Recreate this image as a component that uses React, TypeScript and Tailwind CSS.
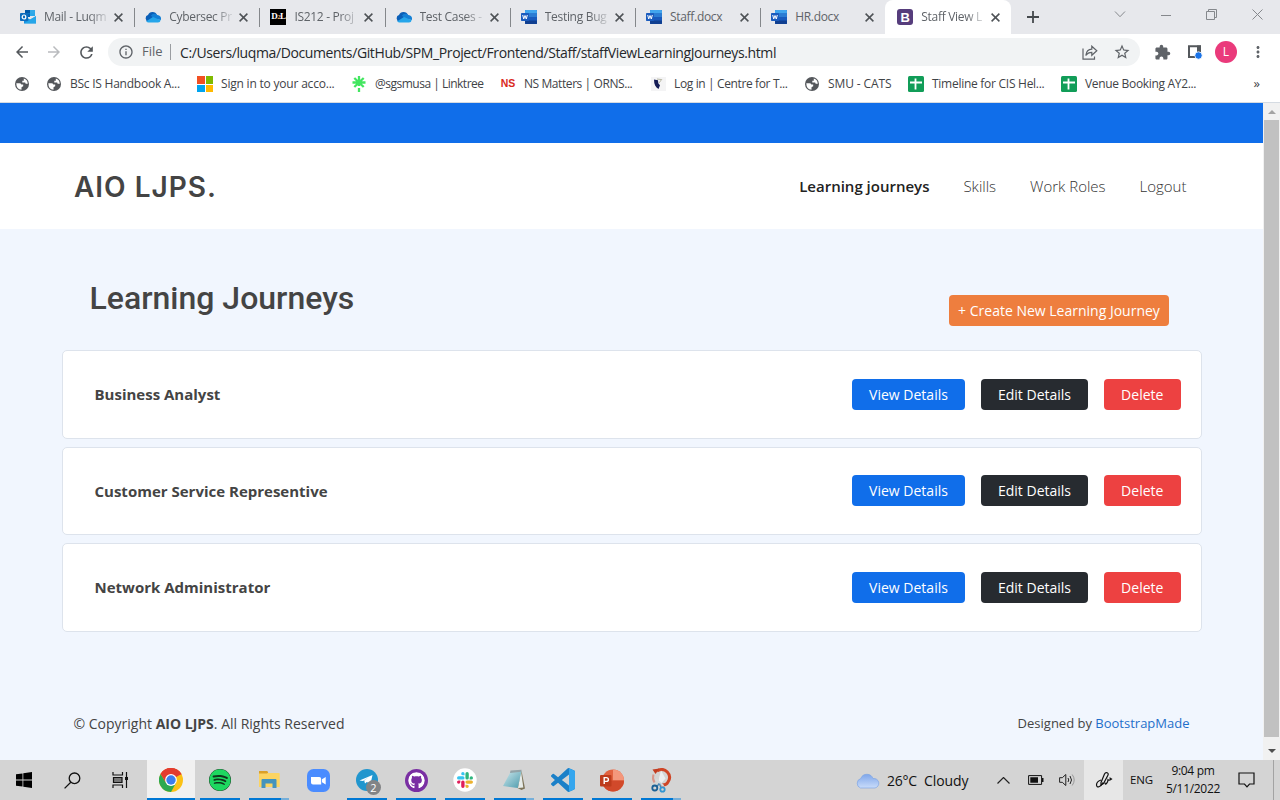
import type { ReactNode } from "react";
import {
  MdArrowBack,
  MdArrowForward,
  MdExtension,
  MdInfoOutline,
  MdMoreVert,
  MdRefresh,
  MdStarBorder,
} from "react-icons/md";
import { FaGithub, FaSpotify } from "react-icons/fa";

/* ---------- favicons ---------- */

function GlobeIcon() {
  return (
    <svg width="14" height="14" viewBox="0 0 14 14">
      <circle cx="7" cy="7" r="7" fill="#54575b" />
      <path
        d="M1.300 6.300h3.200q1.500 0 1.800 1.300h1.900v1.700L6.500 10.300v2.500Q1.300 12.300 1.300 6.300z"
        fill="#fff"
      />
      <path d="M8.800 1.500q3.700 1 4 5.200H11q-.7 0-.8-1.200H7.300V3.800H8.800z" fill="#fff" />
    </svg>
  );
}

function OutlookIcon() {
  return (
    <svg width="16" height="16" viewBox="0 0 16 16">
      <path d="M5 1h10v6H5z" fill="#28a8ea" />
      <path d="M5 1h5v3.500H5z" fill="#0358a7" />
      <path d="M10 1h5v3.500h-5z" fill="#32a9e7" />
      <path d="M5 4.500h5V8H5z" fill="#0364b8" />
      <path d="M4 7l6 3.500L16 7v7.500H4z" fill="#1490df" />
      <path d="M4 14.500L16 7v7.500z" fill="#35b8f1" opacity=".55" />
      <rect x="0" y="4" width="8" height="8" rx=".8" fill="#0f6cbd" />
      <ellipse cx="4" cy="8" rx="1.800" ry="2" fill="none" stroke="#fff" strokeWidth="1.200" />
    </svg>
  );
}

function OneDriveIcon() {
  return (
    <svg width="16" height="11" viewBox="0 0 16 11">
      <path d="M3.300 9.500A3.300 3.300 0 0 1 3 3.100 4.800 4.800 0 0 1 12 3.200L8 7z" fill="#0a5fb8" />
      <path d="M6 3.500a4 4 0 0 1 6.300-.4A3.600 3.600 0 0 1 15.800 8L9 7z" fill="#1480d6" />
      <path d="M1.200 9.200L8 4.900l7.600 3.300A3 3 0 0 1 13 10.600H3.600a3.500 3.500 0 0 1-2.400-1.400z" fill="#25a5ea" />
    </svg>
  );
}

function D2LIcon() {
  return (
    <span className="flex h-4 w-4 flex-col items-center justify-center bg-black font-['Liberation_Serif',serif] text-[9px] leading-[9px] font-bold tracking-[-0.6px] whitespace-nowrap text-white">
      <span>
        D<span className="text-[7px] text-orange-300">2</span>L
      </span>
    </span>
  );
}

function WordIcon() {
  return (
    <svg width="16" height="14" viewBox="0 0 16 14">
      <rect x="4" width="12" height="14" rx=".8" fill="#185abd" />
      <path d="M4 .8Q4 0 4.800 0h10.400q.8 0 .8.800V3.500H4z" fill="#41a5ee" />
      <path d="M4 3.500h12V7H4z" fill="#2b7cd3" />
      <path d="M4 10.500h12v2.700q0 .8-.8.800H4.800q-.8 0-.8-.8z" fill="#103f91" />
      <rect y="3" width="8" height="8" rx=".7" fill="#1b5cbe" />
      <path d="M1.700 5l1 4L4 5.500 5.300 9l1-4" fill="none" stroke="#fff" strokeWidth="1" />
    </svg>
  );
}

function BootstrapIcon() {
  return (
    <span className="flex h-4 w-4 items-center justify-center rounded-[3px] bg-[#563d7c] font-['Liberation_Sans',sans-serif] text-[13px] leading-none font-bold text-white">
      B
    </span>
  );
}

function MicrosoftIcon() {
  return (
    <span className="grid h-4 w-4 grid-cols-2 gap-px">
      <span className="bg-[#f25022]" />
      <span className="bg-[#7fba00]" />
      <span className="bg-[#00a4ef]" />
      <span className="bg-[#ffb900]" />
    </span>
  );
}

function LinktreeIcon() {
  return (
    <svg width="14" height="16" viewBox="0 0 14 16" stroke="#43e660" strokeWidth="2.300" fill="none">
      <path d="M7 0v10M7 12v4M.5 6.500h13M2.300 2l9.400 9M11.700 2l-9.400 9" />
    </svg>
  );
}

function CentreIcon() {
  return (
    <svg width="15" height="14" viewBox="0 0 15 14">
      <rect width="15" height="14" fill="#f4f4f5" />
      <path d="M3 2.500l4 .8.300 3 1.700 2-1.500 3.700C4.500 10.500 3 7.500 3 2.500z" fill="#151c55" />
      <path d="M8 6l3-4M6 2l4 .5" stroke="#b9b8a5" />
    </svg>
  );
}

function SheetsIcon() {
  return (
    <svg width="16" height="16" viewBox="0 0 16 16">
      <rect width="16" height="16" rx="1.500" fill="#119d58" />
      <path d="M2 6.500h12M7.500 2.500v11" stroke="#fff" strokeWidth="1.800" />
    </svg>
  );
}

/* ---------- browser chrome ---------- */

function CloseX() {
  return (
    <svg width="9" height="9" viewBox="0 0 9 9" stroke="#4e5256" strokeWidth="1.500">
      <path d="M.6.600l7.800 7.800M8.400.600L.6 8.400" />
    </svg>
  );
}

const tabs: { title: string; icon: ReactNode; active?: boolean; last?: boolean }[] = [
  { title: "Mail - Luqm", icon: <OutlookIcon /> },
  { title: "Cybersec Pr", icon: <OneDriveIcon /> },
  { title: "IS212 - Proj", icon: <D2LIcon /> },
  { title: "Test Cases -", icon: <OneDriveIcon /> },
  { title: "Testing Bug", icon: <WordIcon /> },
  { title: "Staff.docx", icon: <WordIcon /> },
  { title: "HR.docx", icon: <WordIcon />, last: true },
  { title: "Staff View L", icon: <BootstrapIcon />, active: true },
];

function TabStrip() {
  return (
    <div className="flex h-[34px] shrink-0 bg-[#e7e8ec] pl-[10px]">
      {tabs.map((t, i) => (
        <div
          key={i}
          className={
            t.active
              ? "relative -ml-[1px] flex h-[34px] w-[126px] shrink-0 items-center rounded-t-lg bg-white pl-[12px]"
              : "relative flex h-[34px] w-[125.200px] shrink-0 items-center pl-[10px]"
          }
        >
          <span className="flex w-4 justify-center">{t.icon}</span>
          <span
            className={
              t.title.endsWith(".docx")
                ? "ml-2 w-[66px] text-[12px] tracking-[-0.3px] whitespace-nowrap text-[#5f6368]"
                : "ml-2 w-[66px] text-[12px] tracking-[-0.3px] whitespace-nowrap text-[#5f6368] [mask-image:linear-gradient(to_right,black_68%,rgba(0,0,0,0.15)_96%)]"
            }
          >
            {t.title}
          </span>
          <span className="ml-[4px]">
            <CloseX />
          </span>
          {!t.active && !t.last && <span className="absolute top-[8px] right-0 h-[19px] w-px bg-[#84878b]" />}
        </div>
      ))}
      <div className="flex flex-1 items-center pl-[16px]">
        <svg width="12" height="12" viewBox="0 0 12 12" stroke="#45494d" strokeWidth="1.800">
          <path d="M6 0v12M0 6h12" />
        </svg>
      </div>
      <div className="flex h-[29px] w-[166px] items-center justify-between pr-[17px]">
        <svg width="12" height="7" viewBox="0 0 12 7" fill="none" stroke="#85888c">
          <path d="M1 .5l5 5.200L11 .5" />
        </svg>
        <svg width="10" height="2" viewBox="0 0 10 2">
          <path d="M0 1.500h10" stroke="#85888c" />
        </svg>
        <svg width="11" height="11" viewBox="0 0 11 11" fill="none" stroke="#85888c">
          <path d="M.5 2.500h8v8h-8zM2.500 2.500v-2h8v8h-2" />
        </svg>
        <svg width="11" height="11" viewBox="0 0 11 11" fill="none" stroke="#85888c">
          <path d="M.5.500l10 10M10.500.500l-10 10" />
        </svg>
      </div>
    </div>
  );
}

function AddressRow() {
  return (
    <div className="flex h-9 shrink-0 items-center bg-white pl-[13px] text-[#5f6368]">
      <MdArrowBack size={18} className="text-[#54585c]" />
      <MdArrowForward size={18} className="ml-[14px] text-[#b9bbbe]" />
      <MdRefresh size={19} className="ml-[14px] text-[#54585c]" />
      <div className="ml-[12px] flex h-[28px] w-[1032px] items-center rounded-full bg-[#f1f3f4] pl-[10px]">
        <MdInfoOutline size={16} />
        <span className="ml-[8px] w-[22px] text-[13px]">File</span>
        <span className="mr-[9px] ml-[6px] h-4 w-px bg-[#9a9da1]" />
        <span className="text-[14px] tracking-[-0.385px] whitespace-nowrap text-[#25282b]">
          C:/Users/luqma/Documents/GitHub/SPM_Project/Frontend/Staff/staffViewLearningJourneys.html
        </span>
        <span className="flex-1" />
        <svg width="16" height="15" viewBox="0 0 16 15" fill="none" stroke="#5f6368" strokeWidth="1.200">
          <path d="M1 3.500v10.700h11.500V11.500" />
          <path d="M3.800 10.500C4.300 6.500 6.500 4.300 9.800 4.200V1.200l5 4.600-5 4.500V7.300C7 7.300 5.200 8.300 3.800 10.500z" />
        </svg>
        <MdStarBorder size={18} className="mr-[9px] ml-[15px]" />
      </div>
      <MdExtension size={17} className="ml-[14px]" />
      <svg width="16" height="16" viewBox="0 0 16 16" className="ml-[16px]">
        <path d="M2 2.200h11V13H2z" fill="none" stroke="#54585c" strokeWidth="2" />
        <path d="M10 1.500h4V8h-4z" fill="#54585c" />
        <circle cx="11.500" cy="11.500" r="3.700" fill="#1a73e8" stroke="#fff" strokeWidth=".8" />
      </svg>
      <span className="ml-[12px] flex h-[22px] w-[22px] items-center justify-center rounded-full bg-[#ea3a7b] text-[12px] text-white">
        L
      </span>
      <MdMoreVert size={18} className="ml-[12px]" />
    </div>
  );
}

function Bookmark({ icon, label, box }: { icon: ReactNode; label?: string; box: string }) {
  return (
    <div className={`flex shrink-0 items-center ${box}`}>
      <span className="flex w-4 shrink-0 justify-center">{icon}</span>
      {label && <span className="ml-2 whitespace-nowrap">{label}</span>}
    </div>
  );
}

function Bookmarks() {
  return (
    <div className="flex h-[33px] shrink-0 items-center border-b border-[#d5dbe2] bg-white pb-[4px] pl-[14px] text-[12px] text-[#3f4347]">
      <Bookmark box="w-[32px]" icon={<GlobeIcon />} />
      <Bookmark box="w-[151px] tracking-[-0.24px]" icon={<GlobeIcon />} label="BSc IS Handbook A..." />
      <Bookmark box="w-[154px] tracking-[-0.2px]" icon={<MicrosoftIcon />} label="Sign in to your acco..." />
      <Bookmark box="w-[149px] tracking-[-0.5px]" icon={<LinktreeIcon />} label="@sgsmusa | Linktree" />
      <Bookmark
        box="w-[150px] tracking-[-0.42px]"
        icon={
          <span className="font-['Liberation_Sans',sans-serif] text-[10.500px] font-black tracking-normal text-[#d9291c]">
            NS
          </span>
        }
        label="NS Matters | ORNS..."
      />
      <Bookmark box="w-[154px] tracking-[-0.37px]" icon={<CentreIcon />} label="Log in | Centre for T..." />
      <Bookmark box="w-[104px] tracking-[-0.1px]" icon={<GlobeIcon />} label="SMU - CATS" />
      <Bookmark box="w-[153px] tracking-[-0.27px]" icon={<SheetsIcon />} label="Timeline for CIS Hel..." />
      <Bookmark box="flex-1 tracking-[-0.32px]" icon={<SheetsIcon />} label="Venue Booking AY2..." />
      <span className="mr-[20px] text-[13px]">»</span>
    </div>
  );
}

/* ---------- web page ---------- */

const journeys = ["Business Analyst", "Customer Service Representive", "Network Administrator"];

function JourneyCard({ name }: { name: string }) {
  return (
    <div className="flex h-[88.600px] items-center rounded-[5px] border border-[#dde3ec] bg-white pr-[20px] pl-[32px] text-[14px]">
      <span className="flex-1 text-[15px] font-bold text-[#444]">{name}</span>
      <button className="h-[31px] w-[113px] rounded-[4px] bg-[#106eea] text-white">View Details</button>
      <button className="ml-4 h-[31px] w-[107px] rounded-[4px] bg-[#272b30] text-white">Edit Details</button>
      <button className="ml-4 h-[31px] w-[76.500px] rounded-[4px] bg-[#ed4141] text-white">Delete</button>
    </div>
  );
}

function WebPage() {
  return (
    <div className="flex min-w-0 flex-1 flex-col bg-[#f1f6fe] font-['Open_Sans',sans-serif] text-[#444]">
      <div className="h-10 shrink-0 bg-[#106eea]" />
      <header className="flex h-[86px] shrink-0 items-center justify-between bg-white pr-[76.500px] pl-[74px]">
        <div className="pt-[1px] font-[Inter,sans-serif] text-[28px] font-semibold tracking-[1px] text-[#444]">
          AIO LJPS.
        </div>
        <nav className="flex gap-[34px] pt-px text-[15px] font-light text-[#333]">
          <span className="font-semibold text-[#222]">Learning journeys</span>
          <span>Skills</span>
          <span>Work Roles</span>
          <span>Logout</span>
        </nav>
      </header>
      <main className="flex flex-1 flex-col px-[61.500px] pt-[48px]">
        <div className="flex h-[73px] items-start justify-between pr-[32.500px] pl-[28px]">
          <h1 className="font-[Roboto,sans-serif] text-[32px] leading-[42px] font-medium">Learning Journeys</h1>
          <button className="mt-[18px] h-[31px] w-[220px] rounded-[4px] bg-[#ee7e3e] text-[14px] whitespace-nowrap text-white">
            + Create New Learning Journey
          </button>
        </div>
        <div className="flex flex-col gap-[8px]">
          {journeys.map((j) => (
            <JourneyCard key={j} name={j} />
          ))}
        </div>
        <footer className="mt-[80.500px] flex items-start justify-between pr-[12px] pl-[12px] text-[14px] leading-[24px]">
          <span>
            © Copyright <strong>AIO LJPS</strong>. All Rights Reserved
          </span>
          <span className="text-[13px] leading-[22px]">
            Designed by <span className="text-[#1f6fca]">BootstrapMade</span>
          </span>
        </footer>
      </main>
    </div>
  );
}

function Scrollbar() {
  return (
    <div className="flex w-[17px] shrink-0 flex-col items-center bg-[#f1f1f1]">
      <div className="flex h-[17px] items-center">
        <svg width="8" height="4" viewBox="0 0 8 4">
          <path d="M0 4l4-4 4 4z" fill="#a3a3a3" />
        </svg>
      </div>
      <div className="w-[15px] flex-1 bg-[#c1c1c1]" />
      <div className="flex h-[23px] items-center pt-[5px]">
        <svg width="8" height="4" viewBox="0 0 8 4">
          <path d="M0 0l4 4 4-4z" fill="#505050" />
        </svg>
      </div>
    </div>
  );
}

/* ---------- taskbar ---------- */

function ChromeIcon() {
  return (
    <svg width="24" height="24" viewBox="0 0 24 24">
      <circle cx="12" cy="12" r="12" fill="#fbc116" />
      <path d="M12 12L1.600 6A12 12 0 0 1 22.400 6z" fill="#e33b2e" />
      <path d="M1.600 6l5.600 9L12 12v12A12 12 0 0 1 1.600 6z" fill="#2da94f" />
      <path d="M12 24l5-9h-9z" fill="#2da94f" />
      <path d="M1.600 6L7 14.800 12 6.500h10.600A12 12 0 0 0 1.600 6z" fill="#e33b2e" />
      <circle cx="12" cy="12" r="5.900" fill="#fff" />
      <circle cx="12" cy="12" r="4.700" fill="#3c7ded" />
    </svg>
  );
}

function FolderIcon() {
  return (
    <svg width="22" height="20" viewBox="0 0 22 20">
      <path d="M1 1h8l1.500 2.500H1z" fill="#d99a1d" />
      <path d="M1 3h20q.7 0 .7.700V17H1z" fill="#fcd462" />
      <path d="M1 1h8.300v2.500H1z" fill="#dba027" />
      <path d="M3.500 18V10q0-1 1-1h13q1 0 1 1v8h-4v-4.500h-7V18z" fill="#4493bd" />
    </svg>
  );
}

function ZoomIcon() {
  return (
    <svg width="23" height="23" viewBox="0 0 23 23">
      <rect width="23" height="23" rx="6.500" fill="#4a8cff" />
      <path d="M4 8h8.200q2 0 2 2v5.500H6q-2 0-2-2zM15 10.300L18.700 8v7.500L15 13.200z" fill="#fff" />
    </svg>
  );
}

function TelegramIcon() {
  return (
    <span className="relative flex">
      <svg width="22" height="22" viewBox="0 0 22 22">
        <circle cx="11" cy="11" r="11" fill="#2196ce" />
        <path d="M3.500 11.500L16.500 6l-2 9-3.700-2-1.800 1.500-.8-3L13 8l-6 4z" fill="#fff" />
      </svg>
      <span className="absolute top-[11px] left-[10px] flex h-[15px] w-[15px] items-center justify-center rounded-full bg-[#828486] text-[11px] leading-none text-white">
        2
      </span>
    </span>
  );
}

function SlackIcon() {
  return (
    <svg width="24" height="24" viewBox="-6 -6 36 36">
      <circle cx="12" cy="12" r="17.500" fill="#fff" />
      <path
        fill="#e01e5a"
        d="M5.042 15.165a2.528 2.528 0 0 1-2.520 2.523A2.528 2.528 0 0 1 0 15.165a2.527 2.527 0 0 1 2.522-2.520h2.520v2.520zM6.313 15.165a2.527 2.527 0 0 1 2.521-2.520 2.527 2.527 0 0 1 2.521 2.520v6.313A2.528 2.528 0 0 1 8.834 24a2.528 2.528 0 0 1-2.521-2.522v-6.313z"
      />
      <path
        fill="#36c5f0"
        d="M8.834 5.042a2.528 2.528 0 0 1-2.521-2.520A2.528 2.528 0 0 1 8.834 0a2.528 2.528 0 0 1 2.521 2.522v2.520H8.834zM8.834 6.313a2.528 2.528 0 0 1 2.521 2.521 2.528 2.528 0 0 1-2.521 2.521H2.522A2.528 2.528 0 0 1 0 8.834a2.528 2.528 0 0 1 2.522-2.521h6.312z"
      />
      <path
        fill="#2eb67d"
        d="M18.956 8.834a2.528 2.528 0 0 1 2.522-2.521A2.528 2.528 0 0 1 24 8.834a2.528 2.528 0 0 1-2.522 2.521h-2.522V8.834zM17.688 8.834a2.528 2.528 0 0 1-2.523 2.521 2.527 2.527 0 0 1-2.520-2.521V2.522A2.527 2.527 0 0 1 15.165 0a2.528 2.528 0 0 1 2.523 2.522v6.312z"
      />
      <path
        fill="#ecb22e"
        d="M15.165 18.956a2.528 2.528 0 0 1 2.523 2.522A2.528 2.528 0 0 1 15.165 24a2.527 2.527 0 0 1-2.520-2.522v-2.522h2.520zM15.165 17.688a2.527 2.527 0 0 1-2.520-2.523 2.526 2.526 0 0 1 2.520-2.520h6.313A2.527 2.527 0 0 1 24 15.165a2.528 2.528 0 0 1-2.522 2.523h-6.313z"
      />
    </svg>
  );
}

function NotepadIcon() {
  return (
    <svg width="24" height="22" viewBox="0 0 24 22">
      <defs>
        <linearGradient id="pad" x1="0" y1="0" x2="1" y2="1">
          <stop offset="0" stopColor="#cfe9ee" />
          <stop offset="1" stopColor="#4b9aac" />
        </linearGradient>
      </defs>
      <path d="M19.500 2L23 19.500l-3.500 1.500-4-2z" fill="#7d7459" />
      <path d="M19 2l2.300 16.500-5.300.5z" fill="#e7ece9" />
      <path d="M8.500 3L19.500 2l-3.800 17L1 17z" fill="url(#pad)" />
      <path d="M8.500 1.500L19.500.8v2L8 4z" fill="#93a3a8" />
    </svg>
  );
}

function VSCodeIcon() {
  return (
    <svg width="24" height="24" viewBox="0 0 24 24">
      <path
        fill="#1b80c8"
        d="M23.150 2.587L18.210.210a1.494 1.494 0 0 0-1.705.290l-9.460 8.630-4.120-3.128a.999.999 0 0 0-1.276.057L.327 7.261A1 1 0 0 0 .326 8.740L3.899 12 .326 15.260a1 1 0 0 0 .001 1.479L1.650 17.940a.999.999 0 0 0 1.276.057l4.120-3.128 9.460 8.630a1.492 1.492 0 0 0 1.704.290l4.942-2.377A1.500 1.500 0 0 0 24 20.060V3.939a1.500 1.500 0 0 0-.850-1.352zm-5.146 14.861L10.826 12l7.178-5.448v10.896z"
      />
      <path
        fill="#35a6ee"
        d="M18 .3l5.150 2.287a1.500 1.500 0 0 1 .85 1.352V20.060a1.500 1.500 0 0 1-.85 1.350L18 23.700z"
      />
    </svg>
  );
}

function PowerPointIcon() {
  return (
    <svg width="24" height="23" viewBox="0 0 24 23">
      <circle cx="13" cy="11.500" r="11" fill="#e2623f" />
      <path d="M13 .5a11 11 0 0 1 11 11H13z" fill="#f4977b" />
      <path d="M2 11.500h22a11 11 0 0 1-22 0z" fill="#d1492a" />
      <rect y="6" width="11.500" height="11.500" rx="1" fill="#bd3c1c" />
      <path d="M4.200 15V8.600h2q2.200 0 2.200 1.900t-2.200 1.900h-2" fill="none" stroke="#fff" strokeWidth="1.400" />
    </svg>
  );
}

function SnipIcon() {
  return (
    <svg width="22" height="25" viewBox="0 0 22 25" fill="none">
      <path d="M7 3Q13-.5 17.300 4t.7 10Q16.500 17.500 11.500 17" stroke="#cf4526" strokeWidth="3" />
      <path d="M2.500 1.500l7-1L5.500 6z" fill="#c23c20" />
      <path d="M3.500 6.500q-1.500 4 1 8" stroke="#d9968a" strokeWidth="2" />
      <path d="M11 2.500l4.500 8-7 8L9 10z" fill="#eceef0" />
      <path d="M5.500 11l8 7" stroke="#d5d9dc" strokeWidth="2" />
      <path d="M7.200 18.300l2-3M11 19.800l-1.500-4" stroke="#4b87b4" strokeWidth="1.500" />
      <circle cx="4.800" cy="20" r="2.500" stroke="#1b6196" strokeWidth="1.800" />
      <circle cx="12.500" cy="21.500" r="2.200" stroke="#3194d1" strokeWidth="1.800" />
    </svg>
  );
}

const apps: { name: string; icon: ReactNode; open?: boolean; focused?: boolean; stacked?: boolean }[] = [
  { name: "chrome", icon: <ChromeIcon />, focused: true },
  { name: "spotify", icon: <FaSpotify size={22} className="rounded-full bg-[#10351c] text-[#1ed760]" />, open: true },
  { name: "files", icon: <FolderIcon />, open: true, stacked: true },
  { name: "zoom", icon: <ZoomIcon /> },
  { name: "telegram", icon: <TelegramIcon />, open: true },
  {
    name: "github",
    icon: (
      <span className="flex h-[23px] w-[23px] items-center justify-center rounded-full bg-[#7a2fa3]">
        <FaGithub size={17} className="rounded-full bg-[#7a2fa3] text-white" />
      </span>
    ),
    open: true,
  },
  { name: "slack", icon: <SlackIcon />, open: true },
  { name: "notepad", icon: <NotepadIcon />, open: true, stacked: true },
  { name: "vscode", icon: <VSCodeIcon />, open: true },
  { name: "powerpoint", icon: <PowerPointIcon />, open: true },
  { name: "snip", icon: <SnipIcon />, open: true, stacked: true },
];

function Taskbar() {
  return (
    <div className="flex h-10 shrink-0 items-stretch bg-[#d4d4d4] text-[#111]">
      <div className="flex w-[147px] items-center">
        <svg width="16" height="16" viewBox="0 0 16 16" className="ml-4">
          <path d="M0 2.300L6.500 1.400V7.600H0zM7.300 1.300L16 0v7.600H7.300zM0 8.400h6.500v6.200L0 13.700zM7.300 8.400H16V16l-8.700-1.300z" />
        </svg>
        <svg width="17" height="17" viewBox="0 0 17 17" fill="none" stroke="#111" strokeWidth="1.300" className="ml-[32px]">
          <circle cx="10.500" cy="6.300" r="5.300" />
          <path d="M6.800 10.200L.6 16.400" />
        </svg>
        <svg width="17" height="16" viewBox="0 0 17 16" fill="none" stroke="#111" strokeWidth="1.200" className="ml-[31px]">
          <path d="M1 0v3h9.500V0M1 16v-3h9.500v3M14.500 0v16" />
          <path d="M1.500 5.500h8.500v5H1.500z" fill="#777" />
          <path d="M13 5h3v3h-3z" fill="#111" stroke="none" />
        </svg>
      </div>
      {apps.map((a) => (
        <div
          key={a.name}
          className={
            a.focused
              ? "mr-[1px] flex w-[48px] flex-col items-center bg-[#f1f1f1]"
              : "mr-[1px] flex w-[48px] flex-col items-center"
          }
        >
          <div className="flex h-[38px] items-center pt-[2px]">{a.icon}</div>
          {a.focused && <div className="h-[2px] w-full bg-[#0078d4]" />}
          {a.open && !a.stacked && <div className="h-[2px] w-[40px] bg-[#0078d4]" />}
          {a.stacked && (
            <div className="flex h-[2px] w-[40px]">
              <div className="w-[32px] bg-[#0078d4]" />
              <div className="w-[8px] bg-[#76afd9]" />
            </div>
          )}
        </div>
      ))}
      <div className="flex flex-1 items-center justify-end">
        <svg width="25" height="17" viewBox="0 0 25 17">
          <defs>
            <linearGradient id="cloud" x1="0" y1="0" x2="0" y2="1">
              <stop offset="0" stopColor="#7fa6ea" />
              <stop offset="1" stopColor="#c9dcfa" />
            </linearGradient>
          </defs>
          <path
            d="M5.500 16a5 5 0 0 1 .3-9.500A6.500 6.500 0 0 1 18 6.600 4.800 4.800 0 0 1 20 16z"
            fill="url(#cloud)"
            stroke="#7ea5e4"
            strokeWidth=".7"
          />
        </svg>
        <span className="ml-[7px] w-[37px] text-[14px] tracking-[-0.25px] whitespace-nowrap">26°C</span>
        <span className="w-[73px] text-[14px] tracking-[-0.1px]">Cloudy</span>
        <svg width="13" height="7" viewBox="0 0 13 7" fill="none" stroke="#222" strokeWidth="1.200">
          <path d="M.5 6.500l6-6 6 6" />
        </svg>
        <svg width="16" height="10" viewBox="0 0 16 10" className="ml-[18px]">
          <path d="M.6.600h13v8.800H.6z" fill="none" stroke="#111" />
          <path d="M2.300 2.300h7.700v5.400H2.300zM14 3h1.500v4H14z" fill="#111" />
        </svg>
        <svg width="17" height="14" viewBox="0 0 17 14" fill="none" stroke="#222" className="ml-[15px]">
          <path d="M.6 4.700h2.700L6.800 1.500v11L3.300 9.300H.6z" />
          <path d="M9 5q1.500 2 0 4M11 3q3 4 0 8" />
          <path d="M13.200 1.500q4 5.500 0 11" stroke="#999" />
        </svg>
      </div>
      <div className="ml-[8px] flex w-[39px] items-center justify-center bg-[#e7e7e7]">
        <svg width="18" height="18" viewBox="0 0 18 18" fill="none" stroke="#111" strokeWidth="1.200">
          <path d="M6 11.500L9.500 3q1-2 2.700-1.200t.6 2.700L8.500 12.500 6 14z" />
          <path d="M6 9Q1.500 10.500 1.500 14q.3 2.500 2.500 1.800T8 11.500M10 11.500q0 2.500 1.500 1t1.500-3.700q1.200 1 3.500-.8l-2-1.300" />
        </svg>
      </div>
      <div className="flex w-[157px] items-center pl-[7px] text-[12px]">
        <span className="w-[24px] text-[11.500px] tracking-[-0.1px]">ENG</span>
        <span className="ml-[6px] flex w-[66px] flex-col items-center leading-[18px] tracking-[-0.3px] whitespace-nowrap">
          <span>9:04 pm</span>
          <span>5/11/2022</span>
        </span>
        <svg width="17" height="16" viewBox="0 0 17 16" fill="none" stroke="#111" strokeWidth="1.200" className="ml-[12px]">
          <path d="M1 1h15v11h-4.500l-2.500 2.800L6.500 12H1z" />
        </svg>
        <span className="ml-[18px] h-full w-px bg-[#a3a3a3]" />
      </div>
    </div>
  );
}

export default function App() {
  return (
    <div className="flex h-[800px] w-[1280px] flex-col overflow-hidden bg-white font-['Open_Sans','Noto_Sans',sans-serif]">
      <TabStrip />
      <AddressRow />
      <Bookmarks />
      <div className="flex min-h-0 flex-1">
        <WebPage />
        <Scrollbar />
      </div>
      <Taskbar />
    </div>
  );
}
